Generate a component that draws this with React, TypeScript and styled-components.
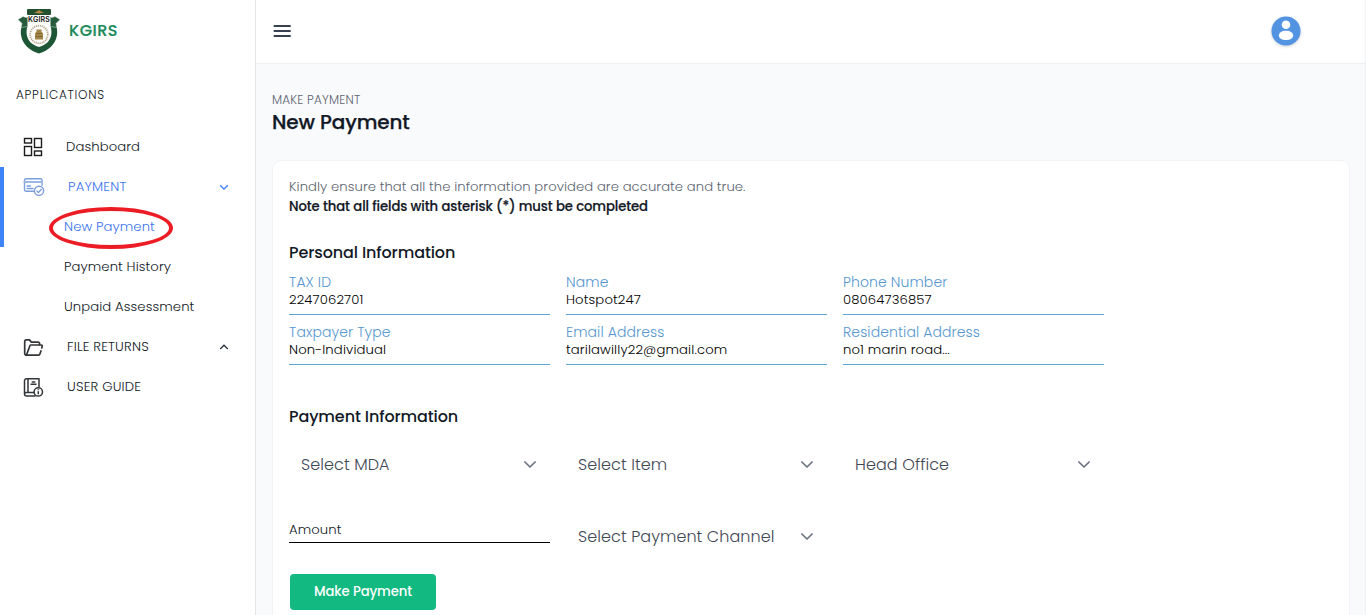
import React from "react";
import styled, { createGlobalStyle } from "styled-components";

const GlobalStyle = createGlobalStyle`
  *, *::before, *::after { box-sizing: border-box; }
  body {
    margin: 0;
    overflow: hidden;
    background: #f9fafc;
    color: #121826;
    font-family: Poppins, Inter, "Liberation Sans", sans-serif;
    font-size: 13.2px;
    font-weight: 300;
    letter-spacing: 0.08px;
  }
  h1, h2, p { margin: 0; }
  svg { display: block; flex: none; }
`;

const Page = styled.div`
  display: flex;
  height: 615px;
  overflow: hidden;
`;

const Sidebar = styled.aside`
  flex: none;
  width: 256px;
  background: #fff;
  border-right: 1px solid #e4e6ea;
`;

const Brand = styled.div`
  display: flex;
  align-items: center;
  height: 62px;
  padding-left: 18px;
  gap: 9px;
`;

const BrandName = styled.span`
  padding-bottom: 1px;
  color: #1b8a5a;
  font-size: 16px;
  font-weight: 500;
  letter-spacing: 0.5px;
  -webkit-text-stroke: 0.2px currentColor;
`;

const SectionLabel = styled.div`
  height: 65px;
  padding: 23px 0 0 16px;
  font-size: 12px;
  line-height: 20px;
  letter-spacing: 0.76px;
`;

const NavGroup = styled.div<{ $active?: boolean }>`
  box-shadow: ${(p) => (p.$active ? "inset 4px 0 #3f83f8" : "none")};
  color: ${(p) => (p.$active ? "#3b74f0" : "inherit")};
`;

const NavItem = styled.div`
  display: flex;
  align-items: center;
  height: 40px;
  padding: 0 26px 0 23px;
  gap: 23px;

  & > svg:nth-of-type(2) { margin: 0 0 1px auto; }
`;

const NavLabel = styled.span<{ $caps?: boolean }>`
  line-height: 20px;
  letter-spacing: ${(p) => (p.$caps ? 0.19 : 0.09)}px;
  white-space: nowrap;
`;

const SubItem = styled.div`
  position: relative;
  display: flex;
  align-items: center;
  height: 40px;
  padding-left: 64px;
`;

const Highlight = styled.span`
  position: absolute;
  left: 49px;
  top: 0;
  width: 124px;
  height: 42px;
  border: 4px solid #ec1c24;
  border-radius: 50%;
`;

const Main = styled.main`
  flex: 1;
  min-width: 0;
  border-right: 1px solid #f0f1f3;
`;

const TopBar = styled.header`
  display: flex;
  align-items: center;
  justify-content: space-between;
  height: 64px;
  padding: 0 61px 2px 15px;
  background: #fff;
  border-bottom: 1px solid #eff0f3;
`;

const Avatar = styled.div`
  width: 36px;
  height: 36px;
  filter: drop-shadow(0 1px 1.5px rgba(40, 60, 90, 0.25));
`;

const Heading = styled.div`
  padding: 26px 0 0 16px;
`;

const Crumb = styled.p`
  color: #5d6471;
  font-size: 12px;
  line-height: 20px;
  letter-spacing: 0.2px;
`;

const Title = styled.h1`
  font-size: 20px;
  font-weight: 500;
  line-height: 24px;
  letter-spacing: -0.13px;
  -webkit-text-stroke: 0.25px currentColor;
`;

const Card = styled.section`
  height: 500px;
  margin: 26px 15px 0 16px;
  padding: 16px;
  background: #fff;
  border: 1px solid #f2f3f6;
  border-radius: 9px;
`;

const Note = styled.p`
  color: #5d6471;
  line-height: 20px;
  letter-spacing: 0.063px;
`;

const StrongNote = styled(Note)`
  color: #121826;
  font-weight: 500;
  letter-spacing: -0.085px;
  -webkit-text-stroke: 0.2px currentColor;
`;

const SectionTitle = styled.h2<{ $top: number }>`
  margin-top: ${(p) => p.$top}px;
  font-size: 16px;
  font-weight: 500;
  line-height: 24px;
  letter-spacing: -0.11px;
`;

const Columns = styled.div`
  display: grid;
  grid-template-columns: repeat(3, 261px);
  column-gap: 16px;
`;

const InfoGrid = styled(Columns)`
  margin-top: 8px;
  row-gap: 8px;
`;

const Info = styled.div`
  height: 42px;
  border-bottom: 1px solid #5da5d3;
`;

const InfoLabel = styled.div`
  color: #5797d0;
  font-size: 14px;
  line-height: 18px;
  letter-spacing: 0.1px;
`;

const InfoValue = styled.div`
  color: #000;
  line-height: 17px;
  letter-spacing: 0.13px;
`;

const FormGrid = styled(Columns)`
  margin-top: 15px;
  row-gap: 32px;
`;

const Select = styled.div`
  display: flex;
  align-items: center;
  justify-content: space-between;
  height: 40px;
  padding: 0 13px 0 12px;
  color: #3f4855;
  font-size: 16px;
`;

const AmountField = styled.div`
  height: 27px;
  padding-top: 4px;
  border-bottom: 1px solid #000;
  line-height: 20px;
`;

const SubmitButton = styled.button`
  display: block;
  width: 146px;
  height: 36px;
  margin: 18px 0 0 1px;
  padding: 0;
  border: 0;
  border-radius: 4px;
  background: #12b981;
  color: #fff;
  font-family: inherit;
  font-size: 13.2px;
  font-weight: 500;
  letter-spacing: -0.1px;
`;

const Crest = () => (
  <svg width="42" height="46" viewBox="0 0 42 46">
    <path d="M3.500 19 9 9h24l5.500 10c.8 3 1 6 .3 9-1.500 8-8 14.500-17.800 17.500C11.200 42.500 4.700 36 3.200 28c-.7-3-.5-6 .3-9Z" fill="#1c5635" />
    <path d="M9.500 7h23v11c.7 2 1.200 5 .8 8.500-1 6.500-6 11-12.300 12.500C14.700 37.500 9.700 33 8.700 26.500 8.300 23 8.800 20 9.500 18Z" fill="#fbfbf9" />
    <path d="M0 11.500 5 8.500l4.500 1.500v8.500L3.200 19.500l.8-4Z" fill="#255b3b" stroke="#d5ddd7" strokeWidth=".5" />
    <path d="m42 11.500-5-3-4.500 1.500v8.500l6.300 1-.8-4Z" fill="#255b3b" stroke="#d5ddd7" strokeWidth=".5" />
    <rect x="9" y="1" width="24" height="6" rx="1" fill="#23512f" />
    <path d="m16 4.500 3-1 2-1.500 2 1.500 3 1-5 1Z" fill="#b78b43" />
    <text x="21" y="14.200" textAnchor="middle" fontFamily="Inter" fontSize="7" fontWeight="600" textLength="22" fill="#151515">KGIRS</text>
    <circle cx="21" cy="26.500" r="8.800" fill="none" stroke="#b4aa8d" strokeWidth="1.700" strokeDasharray="1.200 .8" />
    <path d="M18.500 21.500h5v2l1.500 2v6h-8v-6l1.500-2Z" fill="#a38545" />
    <path d="M18.500 25.500h5M17.500 28.500h7" stroke="#6e5a30" strokeWidth=".7" />
  </svg>
);

const DashboardIcon = () => (
  <svg width="20" height="20" viewBox="0 0 20 20" fill="none" stroke="#1c1c1c" strokeWidth="1.400">
    <rect x="1.500" y="1.500" width="7" height="4.500" />
    <rect x="11.500" y="1.500" width="7" height="9" />
    <rect x="1.500" y="9.500" width="7" height="9" />
    <rect x="11.500" y="14" width="7" height="4.500" />
  </svg>
);

const CardCheckIcon = () => (
  <svg width="22" height="20" viewBox="0 0 22 20" fill="none" stroke="#7c9fdf" strokeWidth="1.400" strokeLinecap="round">
    <path d="M10.500 14.300H3a1.500 1.500 0 0 1-1.500-1.500V3.200A1.500 1.500 0 0 1 3 1.700h14.500A1.500 1.500 0 0 1 19 3.200v5" />
    <path d="M1.500 5h17.500" strokeWidth="2" stroke="#9cb7e8" />
    <path d="M4 9h3.500M4 11.500h6" />
    <circle cx="16" cy="13.800" r="4.600" />
    <path d="m14 13.900 1.500 1.500 2.700-2.800" />
  </svg>
);

const FolderIcon = () => (
  <svg width="21" height="20" viewBox="0 0 21 20" fill="none" stroke="#333638" strokeWidth="1.700" strokeLinejoin="round" strokeLinecap="round">
    <path d="M3.200 18.100a1.500 1.500 0 0 1-1.500-1.500V4.300A1.400 1.400 0 0 1 3.100 2.900h3.400l1.800 2.200h6.800a1.500 1.500 0 0 1 1.500 1.500v1" />
    <path d="m3.500 18 3.400-9.300a1 1 0 0 1 1-.7h10.300a1 1 0 0 1 1 1.300l-.5 1.600M18 13.800l-1 3a1.800 1.800 0 0 1-1.700 1.300H3.200" />
  </svg>
);

const GuideIcon = () => (
  <svg width="21" height="20" viewBox="0 0 21 20" fill="none" stroke="#333638" strokeWidth="1.500" strokeLinejoin="round">
    <path d="M16 10V1.700H3.500a2 2 0 0 0-2 2v13.400a2 2 0 0 0 2 2h9M5 1.700v13.500M11 15.400H3.500a1.800 1.800 0 0 0-1.900 1.800" />
    <path d="M8.700 5h3.600M7.500 7.300h6" />
    <circle cx="15.300" cy="14.900" r="4.200" />
    <path d="M15.300 14.200v3M15.300 12.200v1.100" />
  </svg>
);

const Caret = ({ up }: { up?: boolean }) => (
  <svg width="10" height="10" viewBox="0 0 10 10" fill="none" stroke={up ? "#2b3340" : "#3f83f8"} strokeWidth="1.300">
    <path d={up ? "M1.200 7 5 3.200 8.800 7" : "M1.200 3.200 5 7l3.800-3.800"} />
  </svg>
);

const SelectArrow = () => (
  <svg width="14" height="14" viewBox="0 0 14 14" fill="none" stroke="#6b7280" strokeWidth="1.700" strokeLinecap="round" strokeLinejoin="round">
    <path d="m1.900 5 5.100 5 5.100-5" />
  </svg>
);

const MenuIcon = () => (
  <svg width="22" height="20" viewBox="0 0 22 20" stroke="#374151" strokeWidth="2">
    <path d="M2.700 5h17M2.700 10h17M2.700 15h17" />
  </svg>
);

const details = [
  { label: "TAX ID", value: "2247062701" },
  { label: "Name", value: "Hotspot247" },
  { label: "Phone Number", value: "08064736857" },
  { label: "Taxpayer Type", value: "Non-Individual" },
  { label: "Email Address", value: "tarilawilly22@gmail.com" },
  { label: "Residential Address", value: "no1 marin road..." },
];

const Dropdown = ({ text }: { text: string }) => (
  <Select>
    <span>{text}</span>
    <SelectArrow />
  </Select>
);

export default function App() {
  return (
    <Page>
      <GlobalStyle />
      <Sidebar>
        <Brand>
          <Crest />
          <BrandName>KGIRS</BrandName>
        </Brand>
        <SectionLabel>APPLICATIONS</SectionLabel>
        <nav>
          <NavItem>
            <DashboardIcon />
            <NavLabel>Dashboard</NavLabel>
          </NavItem>
          <NavGroup $active>
            <NavItem>
              <CardCheckIcon />
              <NavLabel $caps>PAYMENT</NavLabel>
              <Caret />
            </NavItem>
            <SubItem>
              <NavLabel>New Payment</NavLabel>
              <Highlight />
            </SubItem>
          </NavGroup>
          <SubItem>
            <NavLabel>Payment History</NavLabel>
          </SubItem>
          <SubItem>
            <NavLabel>Unpaid Assessment</NavLabel>
          </SubItem>
          <NavItem>
            <FolderIcon />
            <NavLabel $caps>FILE RETURNS</NavLabel>
            <Caret up />
          </NavItem>
          <NavItem>
            <GuideIcon />
            <NavLabel $caps>USER GUIDE</NavLabel>
          </NavItem>
        </nav>
      </Sidebar>
      <Main>
        <TopBar>
          <MenuIcon />
          <Avatar>
            <svg width="36" height="36" viewBox="0 0 36 36">
              <circle cx="18" cy="18" r="14.500" fill="#5294e2" />
              <circle cx="18" cy="11.800" r="4.300" fill="#fff" />
              <rect x="10.800" y="17.800" width="14.400" height="9.200" rx="6.500" ry="4.600" fill="#fff" />
            </svg>
          </Avatar>
        </TopBar>
        <Heading>
          <Crumb>MAKE PAYMENT</Crumb>
          <Title>New Payment</Title>
        </Heading>
        <Card>
          <Note>Kindly ensure that all the information provided are accurate and true.</Note>
          <StrongNote>Note that all fields with asterisk (*) must be completed</StrongNote>
          <SectionTitle $top={24}>Personal Information</SectionTitle>
          <InfoGrid>
            {details.map((d) => (
              <Info key={d.label}>
                <InfoLabel>{d.label}</InfoLabel>
                <InfoValue>{d.value}</InfoValue>
              </Info>
            ))}
          </InfoGrid>
          <SectionTitle $top={40}>Payment Information</SectionTitle>
          <FormGrid>
            <Dropdown text="Select MDA" />
            <Dropdown text="Select Item" />
            <Dropdown text="Head Office" />
            <AmountField>Amount</AmountField>
            <Dropdown text="Select Payment Channel" />
          </FormGrid>
          <SubmitButton>Make Payment</SubmitButton>
        </Card>
      </Main>
    </Page>
  );
}
